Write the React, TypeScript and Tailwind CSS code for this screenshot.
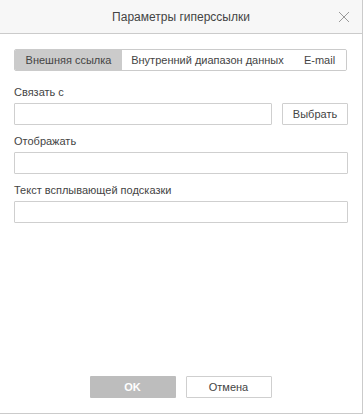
export default function App() {
  return (
    <div className="w-[364px] h-[415px] bg-white" style={{ fontFamily: '"Liberation Sans", Arial, sans-serif' }}>
      <div className="w-[363px] h-[414px] border-r border-b border-[#cbcbcb] flex flex-col">
        {/* header */}
        <div className="relative h-[34px] shrink-0 bg-[#f7f7f7] border-b border-[#cbcbcb] flex items-center justify-center">
          <span className="text-[12px] text-[#444]">Параметры гиперссылки</span>
          <svg className="absolute left-[338px] top-[11px] w-[12px] h-[12px]" viewBox="0 0 12 12" fill="none" stroke="#9a9a9a" strokeWidth={1}>
            <path d="M1 1 L11 11 M11 1 L1 11" />
          </svg>
        </div>

        <div className="flex-1 flex flex-col px-[14px] pt-[15px] text-[11px] text-[#444]">
          {/* tabs */}
          <div className="flex h-[22px] w-[333px] border border-[#cbcbcb] rounded-[2px] overflow-hidden">
            <div className="w-[107px] bg-[#cbcbcb] flex items-center justify-center text-[#444]">Внешняя ссылка</div>
            <div className="w-[171px] bg-white flex items-center justify-center">Внутренний диапазон данных</div>
            <div className="flex-1 bg-white flex items-center justify-center">E-mail</div>
          </div>

          <div className="mt-[14px] h-[14px] leading-[14px]">Связать с</div>
          <div className="mt-[4px] flex gap-[10px]">
            <div className="w-[258px] h-[22px] border border-[#cfcfcf] rounded-[1px]" />
            <button className="w-[66px] h-[22px] border border-[#cfcfcf] rounded-[1px] bg-white text-[11px] text-[#444]">Выбрать</button>
          </div>

          <div className="mt-[9px] h-[14px] leading-[14px]">Отображать</div>
          <div className="mt-[4px] w-[334px] h-[22px] border border-[#cfcfcf] rounded-[1px]" />

          <div className="mt-[9px] h-[14px] leading-[14px]">Текст всплывающей подсказки</div>
          <div className="mt-[4px] w-[334px] h-[22px] border border-[#cfcfcf] rounded-[1px]" />
        </div>

        {/* footer */}
        <div className="h-[37px] shrink-0 flex justify-center gap-[10px] pr-[1px]">
          <button className="w-[86px] h-[22px] bg-[#bdbdbd] text-white font-bold text-[11px] rounded-[1px]">OK</button>
          <button className="w-[86px] h-[22px] bg-white border border-[#cfcfcf] text-[#444] text-[11px] rounded-[1px]">Отмена</button>
        </div>
      </div>
    </div>
  );
}
